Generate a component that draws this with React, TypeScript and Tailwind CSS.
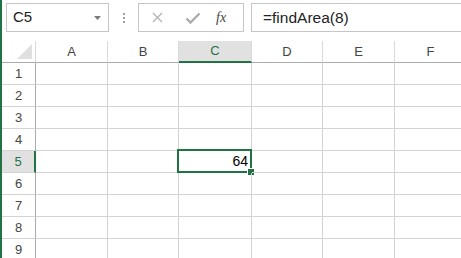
import React from "react";

const cols = [
  { label: "A", w: "w-[72px]" },
  { label: "B", w: "w-[71px]" },
  { label: "C", w: "w-[73px]" },
  { label: "D", w: "w-[71px]" },
  { label: "E", w: "w-[72px]" },
  { label: "F", w: "w-[72px]" },
];

const rows = [1, 2, 3, 4, 5, 6, 7, 8, 9];

function Toolbar() {
  return (
    <div className="flex h-[41px] items-start pt-[3px] pl-[4px]">
      <div className="flex h-[29px] w-[103px] shrink-0 items-center justify-between border border-[#c6c6c6] pl-[6px] pr-[7px]">
        <span className="text-[15px] text-[#222]">C5</span>
        <svg width="7" height="4" viewBox="0 0 7 4">
          <polygon points="0,0 7,0 3.5,4" fill="#7a7a7a" />
        </svg>
      </div>
      <div className="flex h-[29px] w-[29px] shrink-0 flex-col items-center justify-center gap-[2px]">
        <span className="h-[2px] w-[2px] bg-[#a0a0a0]" />
        <span className="h-[2px] w-[2px] bg-[#a0a0a0]" />
        <span className="h-[2px] w-[2px] bg-[#a0a0a0]" />
      </div>
      <div className="flex h-[29px] w-[106px] shrink-0 items-center border border-[#c6c6c6] pl-[13px]">
        <svg width="11" height="11" viewBox="0 0 11 11">
          <path d="M1 1 L10 10 M10 1 L1 10" stroke="#b4b4b4" strokeWidth="1.4" />
        </svg>
        <svg width="16" height="12" viewBox="0 0 16 12" className="ml-[22px]">
          <path d="M1.5 6.5 L5.5 10.5 L14.5 1.5" stroke="#ababab" strokeWidth="2.4" fill="none" />
        </svg>
        <span className="ml-[15px] font-['Liberation_Serif',serif] text-[14px] italic text-[#444]">
          fx
        </span>
      </div>
      <div className="ml-[7px] flex h-[29px] flex-1 items-center border border-r-0 border-[#c6c6c6] pl-[11px]">
        <span className="text-[15.5px] text-[#222]">=findArea(8)</span>
      </div>
    </div>
  );
}

function HeaderRow() {
  return (
    <div className="flex h-[22px]">
      <div className="flex h-[22px] w-[34px] shrink-0 items-end justify-end border-r border-b border-r-[#dadada] border-b-[#ababab] pr-[3px] pb-[3px]">
        <svg width="15" height="15" viewBox="0 0 15 15">
          <polygon points="15,0 15,15 0,15" fill="#dfdfdf" />
        </svg>
      </div>
      {cols.map((c) =>
        c.label === "C" ? (
          <div
            key={c.label}
            className={`${c.w} flex h-[22px] shrink-0 items-center justify-center border-r border-b-2 border-r-[#dadada] border-b-[#217346] bg-[#e1e1e1] text-[13px] text-[#217346]`}
          >
            {c.label}
          </div>
        ) : (
          <div
            key={c.label}
            className={`${c.w} flex h-[22px] shrink-0 items-center justify-center border-r border-b border-r-[#dadada] border-b-[#ababab] text-[13px] text-[#444]`}
          >
            {c.label}
          </div>
        )
      )}
    </div>
  );
}

function Row({ n }: { n: number }) {
  const active = n === 5;
  return (
    <div className="flex h-[22px]">
      <div
        className={
          active
            ? "flex h-[22px] w-[34px] shrink-0 items-center justify-center border-r-2 border-b border-r-[#217346] border-b-[#d4d4d4] bg-[#e1e1e1] text-[13px] text-[#217346]"
            : "flex h-[22px] w-[34px] shrink-0 items-center justify-center border-r border-b border-r-[#ababab] border-b-[#d4d4d4] text-[13px] text-[#444]"
        }
      >
        {n}
      </div>
      {cols.map((c) => (
        <div
          key={c.label}
          className={`${c.w} relative flex h-[22px] shrink-0 items-center justify-end border-r border-b border-[#d4d4d4] pr-[3px]`}
        >
          {active && c.label === "C" && (
            <>
              <span className="text-[14px] text-black">64</span>
              <div className="absolute -top-[2px] -left-[2px] -right-[1px] -bottom-[1px] border-2 border-[#217346]" />
              <div className="absolute -right-[3px] -bottom-[3px] h-[7px] w-[7px] border-l border-t border-white bg-[#217346]" />
            </>
          )}
        </div>
      ))}
    </div>
  );
}

export default function App() {
  return (
    <div className="h-[258px] w-[461px] overflow-hidden border-l-2 border-[#217346] bg-white font-['Liberation_Sans',Arial,sans-serif]">
      <Toolbar />
      <HeaderRow />
      {rows.map((n) => (
        <Row key={n} n={n} />
      ))}
    </div>
  );
}
